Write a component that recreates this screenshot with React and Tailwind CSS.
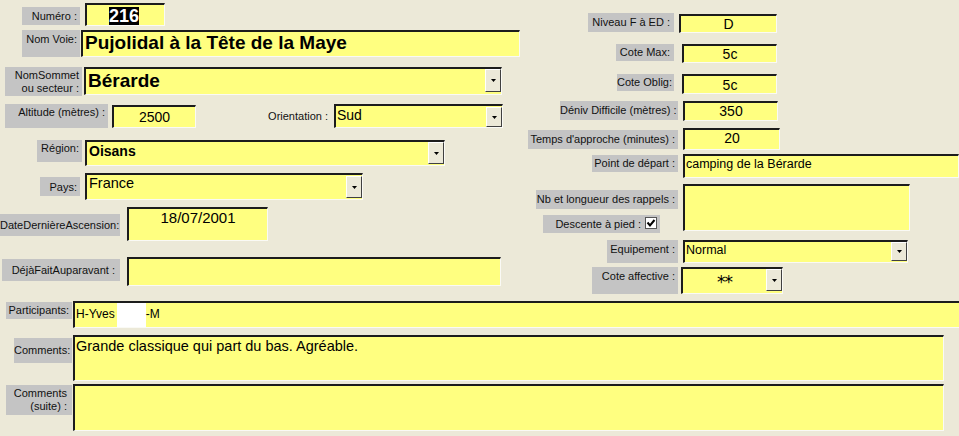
import React from "react";

const fld =
  "bg-[#ffff80] border-t-2 border-l-2 border-t-[#1c1c1c] border-l-[#1c1c1c] border-r border-b border-r-[#fafaf5] border-b-[#fafaf5] box-border overflow-hidden shrink-0";
const lbl =
  "bg-[#c4c4c4] text-[11px] leading-[13px] text-[#111] text-right pr-[3px] shrink-0 whitespace-nowrap";

function Btn({ className }) {
  return (
    <div
      className={
        "w-[16px] shrink-0 flex items-center justify-center bg-[#ece9d8] border border-t-white border-l-white border-r-[#404040] border-b-[#404040] " +
        className
      }
    >
      <svg width="5" height="3" viewBox="0 0 5 3">
        <path d="M0 0h5L2.5 3z" fill="#000" />
      </svg>
    </div>
  );
}

export default function App() {
  return (
    <div className="w-[959px] h-[436px] bg-[#ece9d8] overflow-hidden font-['Liberation_Sans',Arial,sans-serif] text-black">
      <div className="flex h-[301px]">
        {/* LEFT COLUMN */}
        <div className="w-[525px] shrink-0 flex flex-col pt-[3px]">
          {/* Numéro */}
          <div className="flex items-start h-[27px]">
            <div className={lbl + " ml-[22px] mt-[4px] w-[58px] h-[18px] pt-[3px]"}>Numéro :</div>
            <div className={fld + " ml-[5px] w-[80px] h-[23px]"}>
              <span className="inline-block ml-[22px] mt-[1px] bg-black text-white font-bold text-[18px] leading-[18px] px-[0px]">
                216
              </span>
            </div>
          </div>
          {/* Nom Voie */}
          <div className="flex items-start h-[37px]">
            <div className={lbl + " ml-[22px] w-[58px] h-[27px] pt-[3px]"}>Nom Voie:</div>
            <div className={fld + " ml-[1px] w-[439px] h-[27px] pl-[2px] font-bold text-[19px] leading-[22px] whitespace-nowrap"}>
              Pujolidal à la Tête de la Maye
            </div>
          </div>
          {/* NomSommet */}
          <div className="flex items-start h-[37px]">
            <div className={lbl + " ml-[5px] w-[77px] h-[29px] pt-[2px]"}>
              NomSommet
              <br />
              ou secteur :
            </div>
            <div className={fld + " ml-[2px] w-[418px] h-[28px] flex"}>
              <div className="flex-1 pl-[2px] font-bold text-[19px] leading-[24px] whitespace-nowrap">Bérarde</div>
              <Btn className="h-[23px] mt-[0px]" />
            </div>
          </div>
          {/* Altitude + Orientation */}
          <div className="flex items-start h-[36px]">
            <div className={lbl + " ml-[5px] w-[103px] h-[24px] pt-[2px]"}>Altitude (mètres) :</div>
            <div className={fld + " ml-[4px] mt-[1px] w-[84px] h-[23px] text-center text-[14px] leading-[20px]"}>2500</div>
            <div className="w-[138px] shrink-0 text-right pr-[6px] text-[11px] leading-[13px] pt-[6px] text-[#111]">Orientation :</div>
            <div className={fld + " w-[169px] h-[24px] flex"}>
              <div className="flex-1 pl-[1px] text-[14px] leading-[18px]">Sud</div>
              <Btn className="h-[20px] mt-[1px]" />
            </div>
          </div>
          {/* Région */}
          <div className="flex items-start h-[33px]">
            <div className={lbl + " ml-[37px] w-[45px] h-[22px] pt-[2px]"}>Région:</div>
            <div className={fld + " ml-[3px] w-[360px] h-[26px] flex"}>
              <div className="flex-1 pl-[2px] font-bold text-[14px] leading-[18px]">Oisans</div>
              <Btn className="h-[22px] mt-[0px]" />
            </div>
          </div>
          {/* Pays */}
          <div className="flex items-start h-[34px]">
            <div className={lbl + " ml-[40px] mt-[4px] w-[40px] h-[19px] pt-[4px]"}>Pays:</div>
            <div className={fld + " ml-[5px] w-[278px] h-[27px] flex"}>
              <div className="flex-1 pl-[2px] text-[14.5px] leading-[17px]">France</div>
              <Btn className="h-[22px] mt-[1px]" />
            </div>
          </div>
          {/* Date */}
          <div className="flex items-start h-[50px]">
            <div className={lbl + " ml-0 mt-[7px] w-[120px] h-[22px] pt-[5px] pr-[2px]"}>DateDernièreAscension:</div>
            <div className={fld + " ml-[7px] w-[141px] h-[34px] text-center text-[15px] leading-[17px]"}>18/07/2001</div>
          </div>
          {/* DéjàFait */}
          <div className="flex items-start h-[30px]">
            <div className={lbl + " ml-[2px] mt-[2px] w-[118px] h-[22px] pt-[5px] pr-[5px]"}>DéjàFaitAuparavant :</div>
            <div className={fld + " ml-[7px] w-[374px] h-[29px]"}></div>
          </div>
        </div>

        {/* RIGHT COLUMN */}
        <div className="flex-1 flex flex-col pt-[13px]">
          <div className="flex items-start h-[31px]">
            <div className={lbl + " ml-[63px] w-[86px] h-[19px] pt-[3px] pr-[4px]"}>Niveau F à ED :</div>
            <div className={fld + " ml-[5px] mt-[1px] w-[98px] h-[19px] text-center text-[14px] leading-[16px]"}>D</div>
          </div>
          <div className="flex items-start h-[30px]">
            <div className={lbl + " ml-[91px] w-[58px] h-[17px] pt-[2px] pr-[4px]"}>Cote Max:</div>
            <div className={fld + " ml-[8px] w-[95px] h-[19px] text-center text-[14px] leading-[17px]"}>5c</div>
          </div>
          <div className="flex items-start h-[27px]">
            <div className={lbl + " ml-[92px] w-[57px] h-[17px] pt-[2px] pr-[4px]"}>Cote Oblig:</div>
            <div className={fld + " ml-[8px] w-[95px] h-[20px] text-center text-[14px] leading-[18px]"}>5c</div>
          </div>
          <div className="flex items-start h-[27px]">
            <div className={lbl + " ml-[35px] w-[118px] h-[19px] pt-[3px]"}>Déniv Difficile (mètres) :</div>
            <div className={fld + " ml-[5px] w-[95px] h-[20px] text-center text-[14px] leading-[17px]"}>350</div>
          </div>
          <div className="flex items-start h-[26px]">
            <div className={lbl + " ml-[3px] mt-[2px] w-[150px] h-[19px] pt-[3px]"}>Temps d'approche (minutes) :</div>
            <div className={fld + " ml-[5px] w-[97px] h-[22px] text-center text-[14px] leading-[17px]"}>20</div>
          </div>
          <div className="flex items-start h-[30px]">
            <div className={lbl + " ml-[67px] mt-[1px] w-[86px] h-[17px] pt-[2px]"}>Point de départ :</div>
            <div className={fld + " ml-[5px] w-[276px] h-[24px] pl-[1px] text-[12.5px] leading-[17px] whitespace-nowrap"}>
              camping de la Bérarde
            </div>
          </div>
          <div className="flex items-start h-[56px]">
            <div className="w-[153px] shrink-0 flex flex-col">
              <div className={lbl + " ml-[11px] mt-[6px] w-[142px] h-[19px] pt-[3px]"}>Nb et longueur des rappels :</div>
              <div className={lbl + " ml-[18px] mt-[6px] w-[117px] h-[18px] flex items-center justify-end pr-[3px] gap-[4px]"}>
                <span>Descente à pied :</span>
                <svg width="12" height="12" viewBox="0 0 12 12" className="mb-[3px]">
                  <rect x="0.5" y="0.5" width="11" height="11" fill="#ffffff" stroke="#555" />
                  <path d="M2.5 5.5 L5 8.5 L9.5 3" stroke="#000" strokeWidth="2" fill="none" />
                </svg>
              </div>
            </div>
            <div className={fld + " ml-[5px] w-[227px] h-[47px]"}></div>
          </div>
          <div className="flex items-start h-[27px]">
            <div className={lbl + " ml-[82px] w-[71px] h-[23px] pt-[3px]"}>Equipement :</div>
            <div className={fld + " ml-[5px] w-[225px] h-[23px] flex"}>
              <div className="flex-1 pl-[1px] text-[12.5px] leading-[17px]">Normal</div>
              <Btn className="h-[19px] mt-[0px]" />
            </div>
          </div>
          <div className="flex items-start">
            <div className={lbl + " ml-[67px] w-[86px] h-[27px] pt-[3px]"}>Cote affective :</div>
            <div className={fld + " ml-[3px] w-[102px] h-[27px] flex"}>
              <div className="flex-1 text-center font-['DejaVu_Sans',sans-serif] text-[17px] leading-[20px] pt-[3px] tracking-[-1px]">**</div>
              <Btn className="h-[22px] mt-[0px]" />
            </div>
          </div>
        </div>
      </div>

      {/* BOTTOM */}
      <div className="flex items-start h-[34px]">
        <div className={lbl + " ml-[6px] mt-[1px] w-[66px] h-[17px] pt-[2px] pr-[2px]"}>Participants:</div>
        <div className={fld + " ml-[1px] w-[886px] h-[27px] flex items-start text-[12px] leading-[22px] border-r-0"}>
          <span className="ml-[1px]">H-Yves</span>
          <span className="inline-block w-[29px] h-[24px] bg-white ml-[2px]"></span>
          <span>-M</span>
        </div>
      </div>
      <div className="flex items-start h-[49px]">
        <div className={lbl + " ml-[14px] mt-[3px] w-[58px] h-[25px] pt-[6px] pr-[2px]"}>Comments:</div>
        <div className={fld + " ml-[1px] w-[871px] h-[46px] pl-[1px] text-[14.5px] leading-[18px] whitespace-nowrap"}>
          Grande classique qui part du bas. Agréable.
        </div>
      </div>
      <div className="flex items-start">
        <div className={lbl + " ml-[6px] mt-[1px] w-[66px] h-[30px] pt-[2px] pr-[5px]"}>
          Comments
          <br />
          (suite) :
        </div>
        <div className={fld + " ml-[1px] w-[871px] h-[47px]"}></div>
      </div>
    </div>
  );
}
